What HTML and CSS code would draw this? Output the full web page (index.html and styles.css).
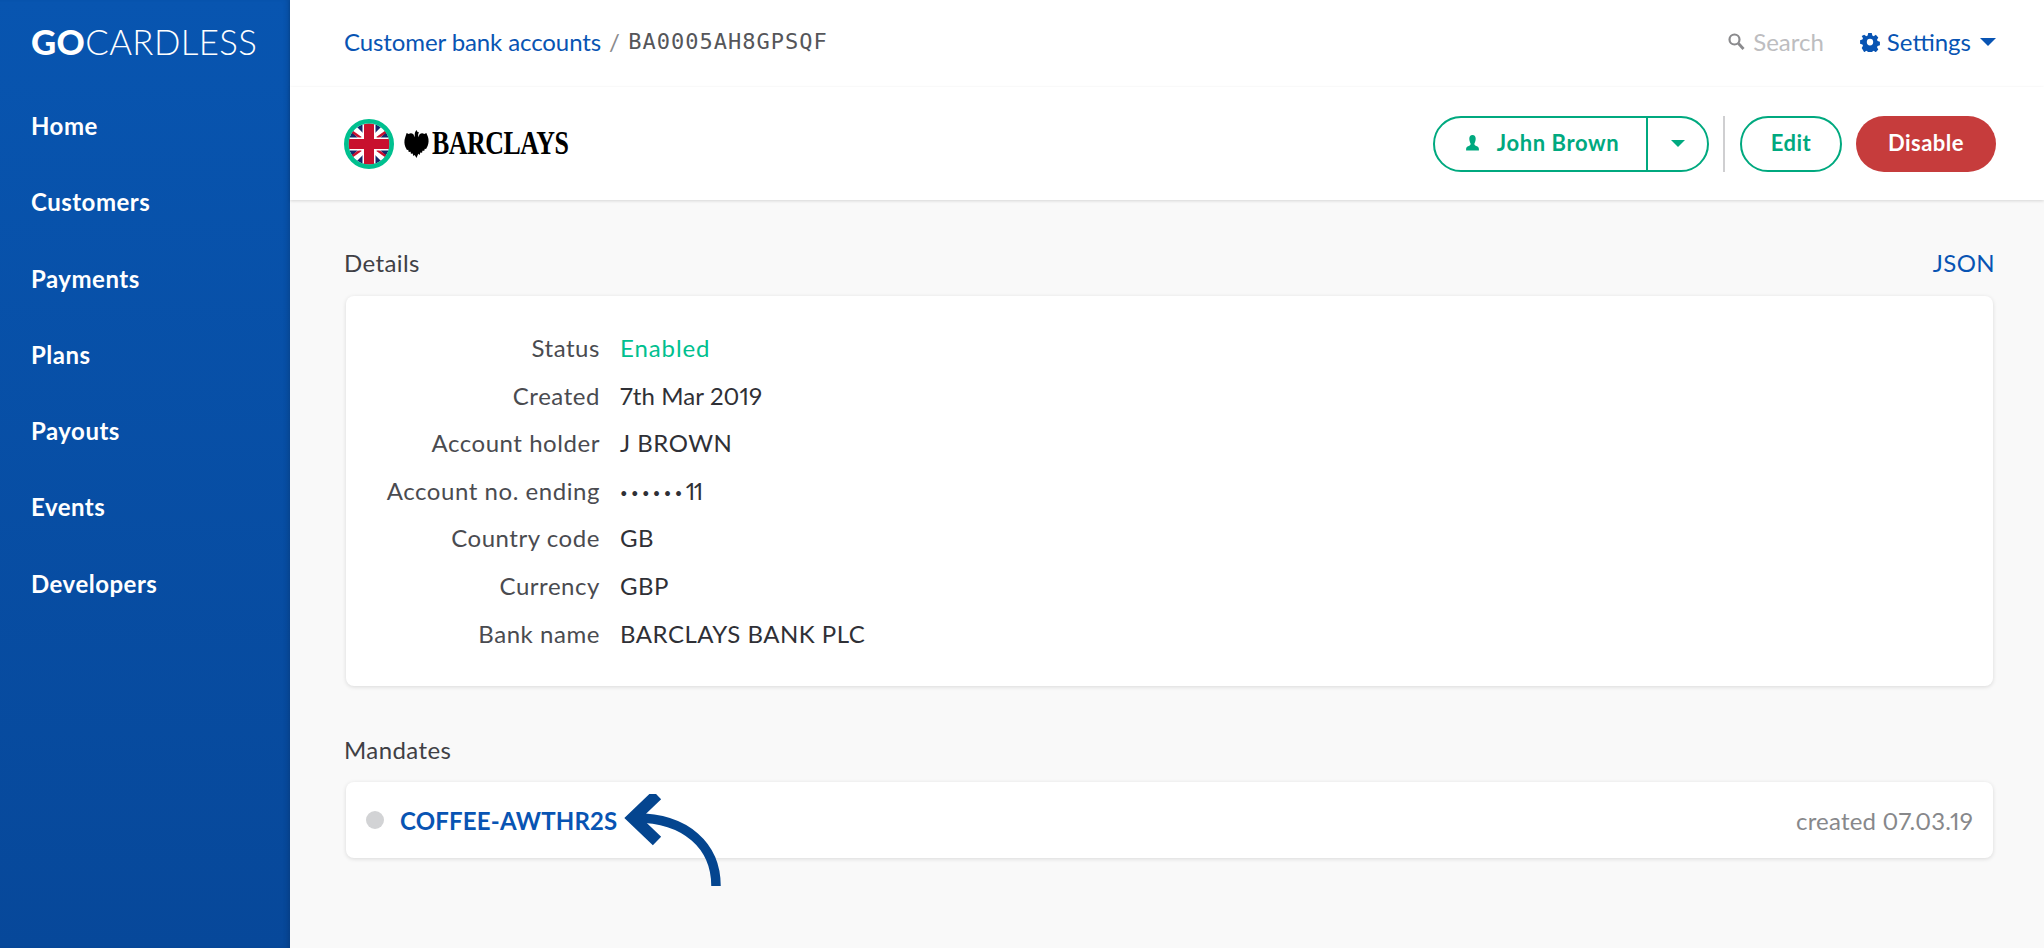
FILE: index.html
```html
<!DOCTYPE html>
<html>
<head>
  <meta charset="UTF-8">
  <title>Customer bank accounts</title>
  <link rel="stylesheet" href="styles.css">
</head>
<body>
  <div class="sidebar">
    <div class="logo"><b>GO</b>CARDLESS</div>
    <a class="nav-item">Home</a>
    <a class="nav-item">Customers</a>
    <a class="nav-item">Payments</a>
    <a class="nav-item">Plans</a>
    <a class="nav-item">Payouts</a>
    <a class="nav-item">Events</a>
    <a class="nav-item">Developers</a>
  </div>

  <div class="main">
    <div class="topbar">
      <div class="crumbs">
        <a class="link crumb-link">Customer bank accounts</a>
        <span class="crumb-sep">/</span>
        <span class="crumb-id">BA0005AH8GPSQF</span>
      </div>
      <div class="top-actions">
        <span class="search">
          <svg width="17" height="17" viewBox="0 0 17 17"><circle cx="6.500" cy="6.500" r="5" fill="none" stroke="#8a8a8d" stroke-width="2.200"/><path d="M10.500 10.500l5 5.500" stroke="#8a8a8d" stroke-width="2.800"/></svg>
          Search
        </span>
        <span class="settings">
          <svg width="20" height="20" viewBox="0 0 24 24"><path fill="#0854b3" fill-rule="evenodd" d="M9.500 0h5l.8 3.400 1.900.8 3-1.800 3.500 3.500-1.800 3 .8 1.900 3.300.9v4.600l-3.300.9-.8 1.900 1.800 3-3.500 3.500-3-1.800-1.900.8-.8 3.400h-5l-.8-3.400-1.900-.8-3 1.800L.3 20.100l1.800-3-.8-1.900L-2 14.300V9.700l3.300-.9.800-1.900-1.800-3L3.800 2.400l3 1.800 1.900-.8zM12 7.500a4.500 4.500 0 100 9 4.500 4.500 0 000-9z" transform="translate(1.800 1.200) scale(.85 .9)"/></svg>
          Settings
          <span class="caret caret-blue"></span>
        </span>
      </div>
    </div>

    <div class="subheader">
      <div class="bank">
        <svg class="flag" width="50" height="50" viewBox="0 0 50 50">
          <defs><clipPath id="flagClip"><circle cx="25" cy="25" r="20.500"/></clipPath></defs>
          <circle cx="25" cy="25" r="22" fill="#fff"/>
          <g clip-path="url(#flagClip)">
            <rect width="50" height="50" fill="#14296b"/>
            <path d="M3 3l44 44M47 3L3 47" stroke="#fff" stroke-width="7"/>
            <path d="M3 9l14 10M47 41L33 31M47 9L33 19M3 41l14-10" stroke="#c8102e" stroke-width="2.400"/>
            <path d="M25 0v50M0 25h50" stroke="#fff" stroke-width="13"/>
            <path d="M25 0v50M0 25h50" stroke="#c8102e" stroke-width="10"/>
          </g>
          <circle cx="25" cy="25" r="22.700" fill="none" stroke="#00c08f" stroke-width="4.600"/>
        </svg>
        <svg class="eagle" width="25" height="28" viewBox="0 0 24 27"><path fill="#000" d="M12 0l1 2 1.500 .5-.9 1.300 .2 3.200L15 4.200C16.500 2.800 18 2.800 19.500 3.800L21.500 3l1.500 3.500c1 3 .8 6-.3 9l-1.500 2.800-1.200-.2-.5 2-1.800-.2-.3 2-1.700-.3-.7 2.400-1.300-1L12 27l-1.700-3-1.300 1-.7-2.400-1.700 .3-.3-2-1.800 .2-.5-2-1.200 .2-1.500-2.800c-1.100-3-1.300-6-.3-9L2.500 3l2 .8C6 2.800 7.500 2.800 9 4.200L10.200 7l.2-4L11 1.500z"/></svg>
        <span class="bank-name">BARCLAYS</span>
      </div>
      <div class="bank-actions">
        <div class="btn-group">
          <span class="btn-main">
            <svg width="15" height="16" viewBox="0 0 14 15"><path fill="#00a97f" d="M7 0c2 0 3 1.500 3 3.500S9.200 7 8.800 8c-.2.800.2 1.500 1.200 2 1.500.6 3 1.200 3 3v1.500H1V13c0-1.800 1.500-2.400 3-3 1-.5 1.400-1.200 1.200-2C4.800 7 4 5.500 4 3.500S5 0 7 0z"/></svg>
            John Brown
          </span>
          <span class="btn-drop"><span class="caret caret-green"></span></span>
        </div>
        <span class="divider"></span>
        <span class="btn btn-outline">Edit</span>
        <span class="btn btn-danger">Disable</span>
      </div>
    </div>

    <div class="content">
      <div class="section-head">
        <span>Details</span>
        <a class="link">JSON</a>
      </div>
      <div class="card details">
        <div class="row"><span class="row-label">Status</span><span class="row-value enabled">Enabled</span></div>
        <div class="row"><span class="row-label">Created</span><span class="row-value row-date">7th Mar 2019</span></div>
        <div class="row"><span class="row-label">Account holder</span><span class="row-value">J BROWN</span></div>
        <div class="row"><span class="row-label">Account no. ending</span><span class="row-value"><span class="dots">••••••</span><span class="last-digits">11</span></span></div>
        <div class="row"><span class="row-label">Country code</span><span class="row-value">GB</span></div>
        <div class="row"><span class="row-label">Currency</span><span class="row-value">GBP</span></div>
        <div class="row"><span class="row-label">Bank name</span><span class="row-value">BARCLAYS BANK PLC</span></div>
      </div>

      <div class="section-head mandates-head">
        <span>Mandates</span>
      </div>
      <div class="card mandate">
        <span class="mandate-dot"></span>
        <a class="mandate-link">COFFEE-AWTHR2S</a>
        <svg class="arrow" width="100" height="95" viewBox="0 0 100 95">
          <path d="M92 92C92 52 62 24 12 24" fill="none" stroke="#04458f" stroke-width="9.500"/>
          <path d="M33 1L9 24l24 23" fill="none" stroke="#04458f" stroke-width="12"/>
        </svg>
        <span class="mandate-date">created 07.03.19</span>
      </div>
    </div>
  </div>
</body>
</html>
```

FILE: styles.css
```css
body {
  margin: 0;
  height: 948px;
  overflow: hidden;
  display: flex;
  font-family: Lato, sans-serif;
  font-size: 24px;
  font-variant-numeric: proportional-nums;
  letter-spacing: 0.4px;
  background: #f9f9f9;
  color: #3f4045;
}

.link {
  color: #0854b3;
}

/* Sidebar */
.sidebar {
  width: 290px;
  height: 948px;
  flex-shrink: 0;
  box-sizing: border-box;
  padding: 23px 31px 0;
  background: linear-gradient(180deg, #0855b0 0%, #07489a 100%);
  box-shadow: inset -5px 0 6px -4px rgba(0, 0, 0, 0.2);
  color: white;
}

.logo {
  font-size: 34.8px;
  line-height: 38px;
  font-weight: 300;
  letter-spacing: 0.4px;
  margin-bottom: 48px;
}

.logo b {
  font-weight: 900;
}

.nav-item {
  display: block;
  height: 76.3px;
  line-height: 34px;
  font-size: 24px;
  font-weight: 700;
  letter-spacing: 0.5px;
}

/* Main column */
.main {
  flex: 1;
  min-width: 0;
}

.topbar {
  height: 87px;
  box-sizing: border-box;
  padding: 0 48px 4px 54px;
  display: flex;
  align-items: center;
  justify-content: space-between;
  background: white;
  box-shadow: 0 1px 2px rgba(0, 0, 0, 0.12);
  position: relative;
}

.crumbs {
  display: flex;
  align-items: center;
  gap: 8px;
}

.crumb-link {
  letter-spacing: -0.1px;
}

.crumb-sep {
  color: #8a8a8d;
}

.crumb-id {
  font-family: "DejaVu Sans Mono", monospace;
  font-size: 22px;
  letter-spacing: 1px;
  color: #55565a;
}

.top-actions {
  display: flex;
  align-items: center;
  gap: 36px;
  letter-spacing: 0;
}

.search {
  display: flex;
  align-items: center;
  gap: 8px;
  color: #bdbdc0;
}

.settings {
  display: flex;
  align-items: center;
  gap: 7px;
  color: #0854b3;
}

.caret {
  display: inline-block;
  width: 0;
  height: 0;
  border-left: 8px solid transparent;
  border-right: 8px solid transparent;
  margin-left: 2px;
}

.caret-blue {
  border-top: 8px solid #0854b3;
}

.caret-green {
  border-left-width: 7px;
  border-right-width: 7px;
  border-top: 7px solid #00a97f;
  margin: 0;
}

.subheader {
  height: 113px;
  box-sizing: border-box;
  padding: 0 48px 0 54px;
  display: flex;
  align-items: center;
  justify-content: space-between;
  background: white;
  box-shadow: 0 1px 3px rgba(0, 0, 0, 0.14);
  position: relative;
}

.bank {
  display: flex;
  align-items: center;
}

.flag {
  margin-right: 10px;
}

.eagle {
  margin-right: 3px;
}

.bank-name {
  font-family: "Liberation Serif", serif;
  font-weight: 700;
  font-size: 33px;
  letter-spacing: -0.6px;
  color: black;
  transform: scaleX(0.785);
  transform-origin: left center;
}

.bank-actions {
  display: flex;
  align-items: center;
}

.btn-group {
  display: flex;
  height: 56px;
  box-sizing: border-box;
  border: 2px solid #00a97f;
  border-radius: 28px;
  color: #00a97f;
  font-weight: 700;
  font-size: 22px;
  letter-spacing: 0.6px;
}

.btn-main {
  width: 213px;
  padding: 0 0 2px 3px;
  box-sizing: border-box;
  display: flex;
  align-items: center;
  justify-content: center;
  gap: 17px;
  border-right: 2px solid #00a97f;
}

.btn-drop {
  width: 59px;
  display: flex;
  align-items: center;
  justify-content: center;
}

.divider {
  width: 2px;
  height: 56px;
  background: #cfcfd1;
  margin: 0 15px 0 14px;
}

.btn {
  height: 56px;
  box-sizing: border-box;
  padding-bottom: 2px;
  display: flex;
  align-items: center;
  justify-content: center;
  border-radius: 28px;
  font-weight: 700;
  font-size: 22px;
  letter-spacing: 0.5px;
}

.btn-outline {
  width: 102px;
  border: 2px solid #00a97f;
  color: #00a97f;
  margin-right: 14px;
}

.btn-danger {
  width: 140px;
  background: #c63c3c;
  color: white;
}

/* Content */
.content {
  padding: 0 49px 0 54px;
}

.section-head {
  display: flex;
  justify-content: space-between;
  height: 96px;
  box-sizing: border-box;
  padding-top: 48px;
  line-height: 30px;
}

.mandates-head {
  height: 96px;
  padding-top: 49px;
}

.card {
  margin: 0 2px 0 2px;
  background: white;
  border-radius: 8px;
  box-shadow: 0 1px 4px rgba(0, 0, 0, 0.13);
}

.details {
  height: 390px;
  box-sizing: border-box;
  padding-top: 28px;
}

.row {
  display: grid;
  grid-template-columns: 254px 1fr;
  column-gap: 20px;
  height: 47.6px;
  line-height: 47px;
}

.row-label {
  text-align: right;
  color: #4a4b50;
  letter-spacing: 0.55px;
}

.row-value {
  color: #2f3036;
  letter-spacing: 0.5px;
}

.row-date {
  letter-spacing: 0.1px;
}

.last-digits {
  letter-spacing: -1.5px;
}

.enabled {
  color: #00c08f;
  letter-spacing: 0.9px;
}

.dots {
  font-size: 13px;
  letter-spacing: 3.4px;
  vertical-align: 2px;
}

.mandate {
  height: 76px;
  box-sizing: border-box;
  padding: 0 20px;
  display: flex;
  align-items: center;
  position: relative;
}

.mandate-dot {
  width: 18px;
  height: 18px;
  border-radius: 50%;
  background: #d2d3d5;
  margin-right: 16px;
}

.mandate-link {
  color: #0854b3;
  font-weight: 700;
  letter-spacing: 0.2px;
}

.arrow {
  position: absolute;
  left: 278px;
  top: 12px;
}

.mandate-date {
  margin-left: auto;
  color: #87888b;
  letter-spacing: 0.2px;
}
```
